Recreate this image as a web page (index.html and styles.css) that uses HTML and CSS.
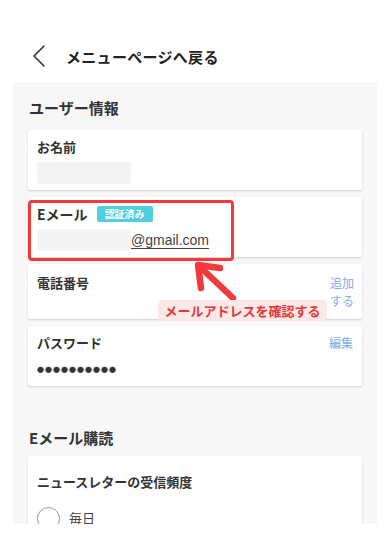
FILE: index.html
```html
<!DOCTYPE html>
<html lang="ja">
  <head>
    <meta charset="utf-8" />
    <meta name="viewport" content="width=device-width, initial-scale=1" />
    <title>アカウント設定</title>
    <link rel="stylesheet" href="styles.css">
  </head>
  <body>
    <div class="screen">
      <!-- Back link -->
      <div class="back-bar">
        <svg class="back-icon" width="14" height="22" viewBox="0 0 14 22" fill="none" xmlns="http://www.w3.org/2000/svg">
          <path d="M12 1L2 11L12 21" stroke="#333" stroke-width="1.6" stroke-linecap="round" stroke-linejoin="round"/>
        </svg>
        <span class="back-text">メニューページへ戻る</span>
      </div>

      <div class="panel">
        <section class="section">
          <h2 class="section-title">ユーザー情報</h2>

          <div class="card">
            <div class="card-label">お名前</div>
            <div class="card-value"><span class="blurred wide"></span></div>
          </div>

          <div class="card">
            <div class="card-label"><span class="label-big">Eメール</span><span class="badge">認証済み</span></div>
            <div class="card-value email"><span class="blurred wide"></span><span class="email-domain">@gmail.com</span></div>
          </div>

          <div class="card card-row">
            <div class="card-label">電話番号</div>
            <a class="card-action narrow">追加する</a>
          </div>

          <div class="card">
            <div class="card-head">
              <div class="card-label">パスワード</div>
              <a class="card-action">編集</a>
            </div>
            <div class="card-value dots">●●●●●●●●●●</div>
          </div>
        </section>

        <section class="section section-second">
          <h2 class="section-title">Eメール購読</h2>
          <div class="card card-tall">
            <div class="card-label">ニュースレターの受信頻度</div>
            <label class="radio-row">
              <span class="radio"></span>
              <span class="radio-text">毎日</span>
            </label>
          </div>
        </section>
      </div>

      <!-- Annotation overlay -->
      <div class="mark-box"></div>
      <svg class="mark-arrow" width="60" height="50" viewBox="0 0 60 50" fill="none" xmlns="http://www.w3.org/2000/svg">
        <path d="M40 38L6 6" stroke="#f23a3c" stroke-width="6.5" stroke-linecap="round"/>
        <path d="M27 8L5 5L8 28" stroke="#f23a3c" stroke-width="6.5" stroke-linecap="round" stroke-linejoin="round"/>
      </svg>
      <div class="mark-note">メールアドレスを確認する</div>
    </div>
  </body>
</html>
```

FILE: styles.css
```css
body {
  margin: 0;
  background: #fff;
  color: #333;
  font-family: "Noto Sans CJK JP", "Noto Sans", sans-serif;
}

.screen {
  position: relative;
  height: 524px;
  overflow: hidden;
}

/* Header */
.back-bar {
  display: flex;
  align-items: center;
  height: 30px;
  padding: 41px 0 0 32px;
}

.back-icon {
  margin-right: 20px;
}

.back-text {
  font-size: 15px;
  font-weight: 700;
  color: #222;
  letter-spacing: 0.3px;
}

/* Gray panel */
.panel {
  margin: 11px 13px 0;
  padding: 14px 15px 40px;
  background: #f7f7f7;
}

.section-title {
  margin: 0 0 10px 1px;
  font-size: 15px;
  line-height: 24px;
  font-weight: 700;
  color: #333;
}

.section-second {
  margin-top: 40px;
}

.section-second .section-title {
  margin-bottom: 6px;
}

.card {
  background: #fff;
  border-radius: 2px;
  box-shadow: 0 1px 2px rgba(0, 0, 0, 0.16);
  padding: 7px 9px 6px;
  margin-bottom: 7px;
}

.card-label {
  display: flex;
  align-items: center;
  font-size: 13px;
  line-height: 20px;
  font-weight: 700;
  color: #333;
}

.label-big {
  font-size: 14px;
}

.card-value {
  display: flex;
  align-items: center;
  height: 22px;
  margin-top: 5px;
  font-size: 14px;
}

.blurred {
  display: inline-block;
  height: 22px;
  background: #f4f4f4;
  border-radius: 2px;
}

.blurred.wide {
  width: 94px;
}

.badge {
  display: inline-block;
  margin-left: 9px;
  padding: 0 8px;
  background: #4fcfe0;
  color: #fff;
  font-size: 10px;
  line-height: 16px;
  font-weight: 700;
  border-radius: 2px;
}

.email-domain {
  font-family: "Liberation Sans", Arial, sans-serif;
  font-size: 14px;
  color: #444;
  text-decoration: underline;
  text-underline-offset: 3px;
}

.card-row {
  display: flex;
  justify-content: space-between;
  align-items: flex-start;
  padding: 10px 9px 9px;
}

.card-row .card-label {
  line-height: 18px;
}

.card-head {
  display: flex;
  justify-content: space-between;
  align-items: center;
}

.card-action {
  font-size: 12px;
  line-height: 18px;
  color: #7aaee8;
  cursor: pointer;
}

.card-action.narrow {
  width: 24px;
  margin-right: -1px;
}

.dots {
  font-size: 7px;
  letter-spacing: 1px;
  color: #333;
}

.card-tall {
  height: 120px;
  padding-top: 16px;
}

.radio-row {
  display: flex;
  align-items: flex-start;
  gap: 9px;
  margin-top: 15px;
  font-size: 13px;
  color: #444;
}

.radio {
  width: 21px;
  height: 21px;
  border: 1px solid #9a9a9a;
  border-radius: 50%;
}

.radio-text {
  line-height: 18px;
  margin-top: 2px;
}

/* Annotation overlay */
.mark-box {
  position: absolute;
  left: 28px;
  top: 200px;
  width: 200px;
  height: 55px;
  border: 3px solid #f23a3c;
  border-radius: 4px;
}

.mark-arrow {
  position: absolute;
  left: 193px;
  top: 260px;
}

.mark-note {
  position: absolute;
  left: 158px;
  top: 300px;
  width: 169px;
  height: 21px;
  line-height: 21px;
  text-align: center;
  background: #fde8e8;
  color: #e5383b;
  font-size: 13px;
  font-weight: 700;
  border-radius: 4px;
}
```
